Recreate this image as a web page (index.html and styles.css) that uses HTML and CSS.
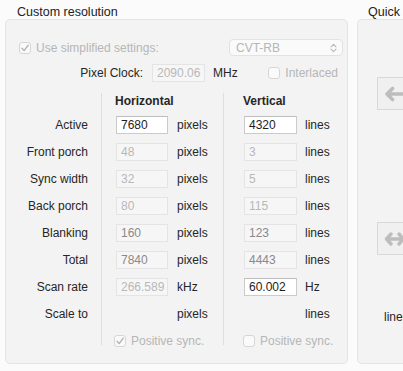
FILE: index.html
```html
<!DOCTYPE html>
<html lang="en">

<head>
    <meta charset="UTF-8">
    <meta name="viewport" content="width=device-width, initial-scale=1.0">
    <title>Custom resolution</title>
    <link rel="stylesheet" href="styles.css">
</head>

<body>
    <div class="window">
        <section class="panel panel-main">
            <div class="panel-title">Custom resolution</div>
            <div class="box">
                <div class="top-row">
                    <label class="check disabled">
                        <span class="checkbox checked">
                            <svg width="12" height="12" viewBox="0 0 12 12"><path d="M3 6.3 L5.1 8.6 L9.2 3.3" fill="none" stroke="#b4b4b4" stroke-width="1.4" stroke-linecap="round" stroke-linejoin="round"/></svg>
                        </span>
                        Use simplified settings:
                    </label>
                    <div class="popup">
                        <span>CVT-RB</span>
                        <svg width="7" height="10" viewBox="0 0 7 10"><path d="M1 3.8 L3.5 1.3 L6 3.8 M1 6.2 L3.5 8.7 L6 6.2" fill="none" stroke="#b8b8b8" stroke-width="1.1" stroke-linecap="round" stroke-linejoin="round"/></svg>
                    </div>
                </div>

                <div class="clock-row">
                    <span class="clock-label">Pixel Clock:</span>
                    <div class="field disabled clock-field">2090.06</div>
                    <span class="unit">MHz</span>
                    <label class="check disabled interlaced">
                        <span class="checkbox"></span>
                        Interlaced
                    </label>
                </div>

                <div class="timing">
                    <div class="sep sep-1"></div>
                    <div class="sep sep-2"></div>

                    <div class="label"></div>
                    <div class="cell h head">Horizontal</div>
                    <div class="cell v head">Vertical</div>

                    <div class="label">Active</div>
                    <div class="cell h"><div class="field">7680</div><span class="unit">pixels</span></div>
                    <div class="cell v"><div class="field">4320</div><span class="unit">lines</span></div>

                    <div class="label">Front porch</div>
                    <div class="cell h"><div class="field disabled">48</div><span class="unit">pixels</span></div>
                    <div class="cell v"><div class="field disabled">3</div><span class="unit">lines</span></div>

                    <div class="label">Sync width</div>
                    <div class="cell h"><div class="field disabled">32</div><span class="unit">pixels</span></div>
                    <div class="cell v"><div class="field disabled">5</div><span class="unit">lines</span></div>

                    <div class="label">Back porch</div>
                    <div class="cell h"><div class="field disabled">80</div><span class="unit">pixels</span></div>
                    <div class="cell v"><div class="field disabled">115</div><span class="unit">lines</span></div>

                    <div class="label">Blanking</div>
                    <div class="cell h"><div class="field readonly">160</div><span class="unit">pixels</span></div>
                    <div class="cell v"><div class="field readonly">123</div><span class="unit">lines</span></div>

                    <div class="label">Total</div>
                    <div class="cell h"><div class="field readonly">7840</div><span class="unit">pixels</span></div>
                    <div class="cell v"><div class="field readonly">4443</div><span class="unit">lines</span></div>

                    <div class="label">Scan rate</div>
                    <div class="cell h"><div class="field disabled">266.589</div><span class="unit">kHz</span></div>
                    <div class="cell v"><div class="field">60.002</div><span class="unit">Hz</span></div>

                    <div class="label">Scale to</div>
                    <div class="cell h"><div class="spacer"></div><span class="unit">pixels</span></div>
                    <div class="cell v"><div class="spacer"></div><span class="unit">lines</span></div>

                    <div class="label"></div>
                    <div class="cell h">
                        <label class="check disabled sync">
                            <span class="checkbox checked">
                                <svg width="12" height="12" viewBox="0 0 12 12"><path d="M3 6.3 L5.1 8.6 L9.2 3.3" fill="none" stroke="#b4b4b4" stroke-width="1.4" stroke-linecap="round" stroke-linejoin="round"/></svg>
                            </span>
                            Positive sync.
                        </label>
                    </div>
                    <div class="cell v">
                        <label class="check disabled sync">
                            <span class="checkbox"></span>
                            Positive sync.
                        </label>
                    </div>
                </div>
            </div>
        </section>

        <section class="panel panel-quick">
            <div class="panel-title">Quick conversion</div>
            <div class="box quick-box">
                <button class="icon-button first">
                    <svg width="22" height="16" viewBox="0 0 22 16"><path d="M8.5 2.5 L3 8 L8.5 13.5 M3 8 H24" fill="none" stroke="#bdbdbd" stroke-width="3.6" stroke-linecap="round" stroke-linejoin="round"/></svg>
                </button>
                <button class="icon-button second">
                    <svg width="22" height="16" viewBox="0 0 22 16"><path d="M7 3 L2.5 8 L7 13 M2.5 8 H19.5 M15 3 L19.5 8 L15 13" fill="none" stroke="#bdbdbd" stroke-width="3.4" stroke-linecap="round" stroke-linejoin="round"/></svg>
                </button>
                <div class="quick-unit">lines</div>
            </div>
        </section>
    </div>
</body>

</html>
```

FILE: styles.css
```css
body {
    margin: 0;
    background: #fbfbfb;
    font-family: "Liberation Sans", Arial, sans-serif;
    font-size: 12px;
    color: #262626;
    overflow: hidden;
    height: 371px;
}

.window {
    display: flex;
    padding-left: 5px;
}

.panel {
    flex-shrink: 0;
}

.panel-main {
    width: 343px;
}

.panel-quick {
    width: 200px;
    margin-left: 9px;
}

.panel-title {
    height: 19px;
    box-sizing: border-box;
    padding: 5px 0 0 12px;
    line-height: 14px;
    font-size: 12.5px;
    color: #222;
    white-space: nowrap;
}

.panel-quick .panel-title {
    padding-left: 11px;
}

.box {
    background: #f3f3f3;
    border: 1px solid #e4e4e4;
    border-radius: 5px;
    height: 345px;
    box-sizing: border-box;
    padding: 19px 4px 0 0;
}

/* checkboxes */
.check {
    display: flex;
    align-items: center;
    gap: 5px;
    white-space: nowrap;
}

.check.disabled {
    color: #b6b6b6;
}

.checkbox {
    width: 12px;
    height: 12px;
    box-sizing: border-box;
    border: 1px solid #d6d6d6;
    border-radius: 3px;
    background: #fafafa;
    display: flex;
    align-items: center;
    justify-content: center;
}

.checkbox svg {
    display: block;
    margin: -1px;
}

/* first rows */
.top-row {
    display: flex;
    justify-content: space-between;
    align-items: center;
    height: 17px;
    padding-left: 13px;
}

.popup {
    width: 114px;
    height: 17px;
    box-sizing: border-box;
    border: 1px solid #e2e2e2;
    border-radius: 4px;
    background: #fafafa;
    display: flex;
    align-items: center;
    justify-content: space-between;
    padding: 0 5px 0 6px;
    color: #b6b6b6;
}

.clock-row {
    display: flex;
    align-items: center;
    height: 18px;
    margin-top: 8px;
}

.clock-label {
    width: 137px;
    text-align: right;
}

.clock-field {
    width: 53px;
    margin-left: 9px;
    margin-right: 8px;
}

.interlaced {
    margin-left: auto;
    margin-right: 5px;
}

/* fields */
.field {
    box-sizing: border-box;
    height: 18px;
    line-height: 16px;
    padding-left: 4px;
    background: #fff;
    border: 1px solid #cbcbcb;
    border-top-color: #bdbdbd;
    color: #1e1e1e;
    white-space: nowrap;
    overflow: hidden;
}

.field.disabled {
    background: #f6f6f6;
    border-color: #e4e4e4;
    color: #b8b8b8;
}

.field.readonly {
    background: #f6f6f6;
    border-color: #e4e4e4;
    color: #8a8a8a;
}

/* timing table */
.timing {
    display: grid;
    grid-template-columns: 95px 1px 121px 1px auto;
    grid-template-rows: 22px repeat(9, 27px);
    margin-top: 7px;
}

.sep {
    grid-row: 1 / -1;
    background: #dedede;
    margin: 4px 0 9px;
}

.sep-1 {
    grid-column: 2;
}

.sep-2 {
    grid-column: 4;
}

.label {
    grid-column: 1;
    text-align: right;
    padding-right: 13px;
    display: flex;
    align-items: center;
    justify-content: flex-end;
}

.cell {
    display: flex;
    align-items: center;
    gap: 9px;
}

.cell.h {
    grid-column: 3;
    padding-left: 14px;
}

.cell.v {
    grid-column: 5;
    padding-left: 20px;
    gap: 8px;
}

.cell.h .field {
    width: 52px;
}

.cell.v .field {
    width: 53px;
}

.cell .spacer {
    width: 52px;
}

.cell.v .spacer {
    width: 53px;
}

.head {
    font-weight: bold;
    padding-top: 1px;
}

.cell.h.head {
    padding-left: 13px;
}

.cell.v.head {
    padding-left: 19px;
}

.sync {
    margin-left: -2px;
    margin-top: 1px;
}

.cell.v .sync {
    margin-left: -1px;
}

/* quick conversion */
.quick-box {
    padding: 57px 0 0 19px;
    border-right: none;
    border-radius: 5px 0 0 5px;
}

.icon-button {
    display: flex;
    align-items: center;
    width: 60px;
    height: 33px;
    padding: 0 0 0 6px;
    border: 1px solid #d8d8d8;
    background: #f0f0f0;
}

.icon-button.second {
    margin-top: 112px;
}

.quick-unit {
    margin-top: 55px;
    padding-left: 7px;
}
```
